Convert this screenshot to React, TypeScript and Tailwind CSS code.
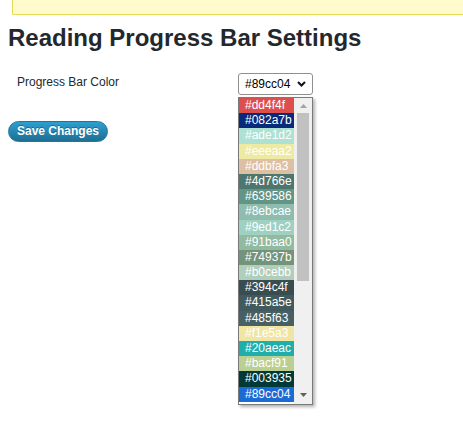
import React from "react";

const colors = [
  "#dd4f4f",
  "#082a7b",
  "#ade1d2",
  "#eeeaa2",
  "#ddbfa3",
  "#4d766e",
  "#639586",
  "#8ebcae",
  "#9ed1c2",
  "#91baa0",
  "#74937b",
  "#b0cebb",
  "#394c4f",
  "#415a5e",
  "#485f63",
  "#f1e5a3",
  "#20aeac",
  "#bacf91",
  "#003935",
  "#89cc04",
];

function ColorList({ selected }: { selected: string }) {
  return (
    <div className="absolute left-[238px] top-[97px] flex w-[75px] border border-[#7a7a7a] bg-white shadow-[2px_2px_3px_rgba(0,0,0,0.3)]">
      <div className="w-[55px]">
        {colors.map((c) => (
          <div
            key={c}
            className="h-[15.2px] pl-[6px] text-[12px] leading-[15px] text-white"
            style={{ backgroundColor: c === selected ? "#1b6ad6" : c }}
          >
            {c}
          </div>
        ))}
        <div className="h-[2px]" />
      </div>
      <div className="flex w-[18px] flex-col bg-[#f0f0f0]">
        <div className="flex h-[15px] items-center justify-center">
          <svg width="7" height="4" viewBox="0 0 7 4">
            <path d="M0 4 L3.5 0 L7 4 Z" fill="#a3a3a3" />
          </svg>
        </div>
        <div className="mx-[3px] h-[168px] w-[12px] bg-[#c1c1c1]" />
        <div className="flex-1" />
        <div className="flex h-[17px] items-center justify-center">
          <svg width="7" height="4" viewBox="0 0 7 4">
            <path d="M0 0 L7 0 L3.5 4 Z" fill="#606060" />
          </svg>
        </div>
      </div>
    </div>
  );
}

export default function App() {
  const selected = "#89cc04";

  return (
    <div className="relative min-h-[433px] bg-white font-['Liberation_Sans',Arial,sans-serif] text-[#23282d]">
      <div className="ml-[12px] h-[15px] rounded-bl-[2px] border-b border-l border-[#e6db55] bg-[#fffbcc]" />

      <div className="px-[8px]">
        <h1 className="mt-[11px] text-[24px] font-bold leading-[24px] text-[#23282d]">
          Reading Progress Bar Settings
        </h1>

        <div className="mt-[23px] flex items-start pl-[9px]">
          <label className="mt-[1px] w-[221px] text-[12px] leading-[16px] text-[#23282d]">
            Progress Bar Color
          </label>
          <div className="flex h-[22px] w-[75px] items-center justify-between rounded-[3px] border border-[#8f8f8f] bg-white pl-[6px] pr-[6px] text-[12px] text-black">
            <span>{selected}</span>
            <svg width="9" height="6" viewBox="0 0 9 6">
              <path d="M1 1 L4.5 4.5 L8 1" stroke="#111" strokeWidth="2" fill="none" />
            </svg>
          </div>
        </div>

        <button className="mt-[26px] h-[21px] rounded-full border border-[#21759b] bg-gradient-to-b from-[#2e9fd2] to-[#1e6f94] px-[8px] text-[12px] font-bold leading-[19px] text-white [text-shadow:0_-1px_0_rgba(0,0,0,0.3)]">
          Save Changes
        </button>
      </div>

      <ColorList selected={selected} />
    </div>
  );
}
